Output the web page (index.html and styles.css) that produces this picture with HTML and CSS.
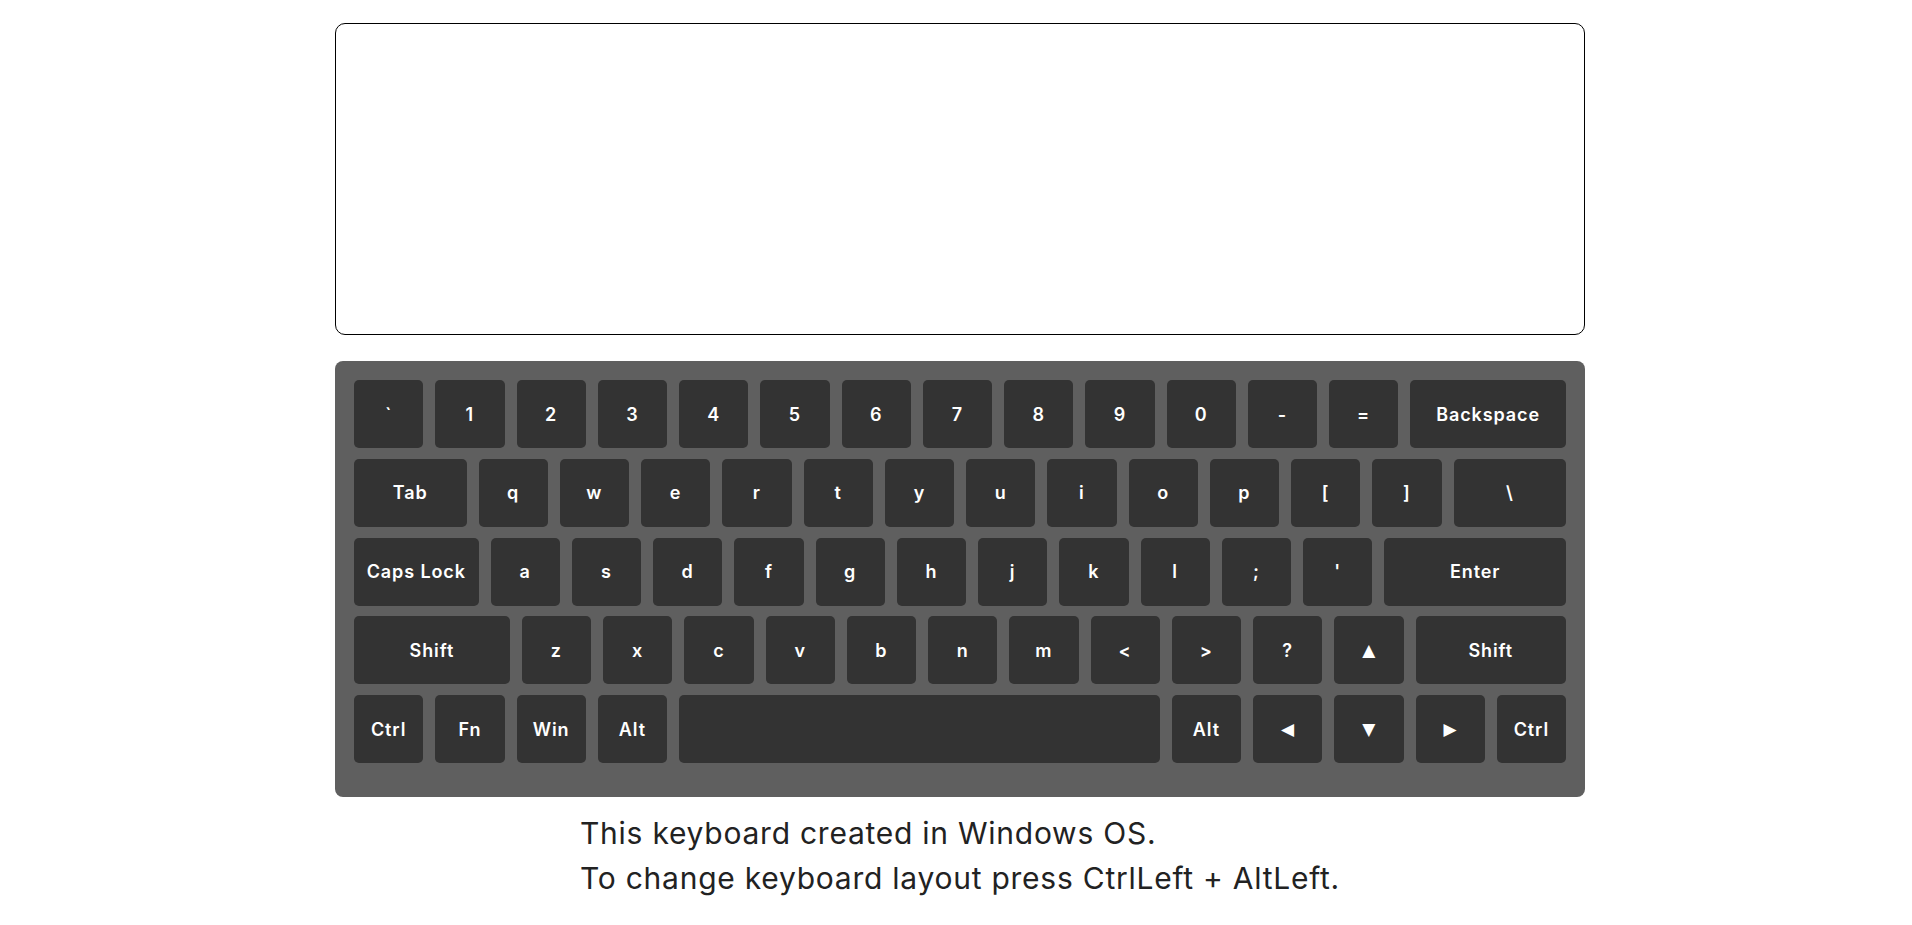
FILE: index.html
```html
<!DOCTYPE html>
<html lang="en">
<head>
<meta charset="utf-8">
<title>Virtual Keyboard</title>
<link rel="stylesheet" href="styles.css">
</head>
<body>
<div class="page">
  <textarea class="screen"></textarea>
  <div class="keyboard">
    <div class="row">
      <div class="key">`</div><div class="key">1</div><div class="key">2</div><div class="key">3</div><div class="key">4</div><div class="key">5</div><div class="key">6</div><div class="key">7</div><div class="key">8</div><div class="key">9</div><div class="key">0</div><div class="key">-</div><div class="key">=</div><div class="key grow">Backspace</div>
    </div>
    <div class="row">
      <div class="key grow">Tab</div><div class="key">q</div><div class="key">w</div><div class="key">e</div><div class="key">r</div><div class="key">t</div><div class="key">y</div><div class="key">u</div><div class="key">i</div><div class="key">o</div><div class="key">p</div><div class="key">[</div><div class="key">]</div><div class="key grow">\</div>
    </div>
    <div class="row">
      <div class="key caps">Caps Lock</div><div class="key">a</div><div class="key">s</div><div class="key">d</div><div class="key">f</div><div class="key">g</div><div class="key">h</div><div class="key">j</div><div class="key">k</div><div class="key">l</div><div class="key">;</div><div class="key">'</div><div class="key grow">Enter</div>
    </div>
    <div class="row">
      <div class="key shift-left">Shift</div><div class="key">z</div><div class="key">x</div><div class="key">c</div><div class="key">v</div><div class="key">b</div><div class="key">n</div><div class="key">m</div><div class="key">&lt;</div><div class="key">&gt;</div><div class="key">?</div><div class="key arrow">&#9650;</div><div class="key grow">Shift</div>
    </div>
    <div class="row">
      <div class="key">Ctrl</div><div class="key">Fn</div><div class="key">Win</div><div class="key">Alt</div><div class="key grow"></div><div class="key">Alt</div><div class="key arrow">&#9664;</div><div class="key arrow">&#9660;</div><div class="key arrow">&#9654;</div><div class="key">Ctrl</div>
    </div>
  </div>
  <div class="note">
    <p>This keyboard created in Windows OS.</p>
    <p>To change keyboard layout press CtrlLeft + AltLeft.</p>
  </div>
</div>
</body>
</html>
```
FILE: styles.css
```css
html, body {
  margin: 0;
  padding: 0;
  background: #ffffff;
}

body {
  padding-left: 8px;
  font-family: Inter, "Open Sans", sans-serif;
}

.page {
  width: 1250px;
  margin: 0 auto;
  padding-top: 23px;
}

.screen {
  display: block;
  box-sizing: border-box;
  width: 1250px;
  height: 312px;
  margin: 0;
  border: 1px solid #000000;
  border-radius: 10px;
  resize: none;
  outline: none;
  background: #fff;
}

.keyboard {
  box-sizing: border-box;
  margin-top: 26px;
  width: 1250px;
  height: 436px;
  padding: 19px 19px 34px 19px;
  background: #5f5f5f;
  border-radius: 8px;
  display: flex;
  flex-direction: column;
  gap: 10.75px;
}

.row {
  display: flex;
  gap: 12px;
}

.key {
  flex: 0 0 69.25px;
  height: 68px;
  box-sizing: border-box;
  background: #333333;
  border-radius: 5px;
  color: #ffffff;
  font-family: Inter, "Open Sans", sans-serif;
  font-size: 18px;
  font-weight: 600;
  letter-spacing: 0.9px;
  display: flex;
  align-items: center;
  justify-content: center;
}

.key.grow {
  flex: 1 1 0;
}

.key.caps {
  flex: 0 0 124.5px;
}

.key.shift-left {
  flex: 0 0 155.75px;
}

.key.arrow {
  font-family: "DejaVu Sans", sans-serif;
  font-size: 17px;
  letter-spacing: 0;
}

.note {
  width: fit-content;
  margin: 14px auto 0;
  color: #222222;
  font-size: 30px;
  line-height: 45px;
  letter-spacing: 0.75px;
}

.note p {
  margin: 0;
}
```
